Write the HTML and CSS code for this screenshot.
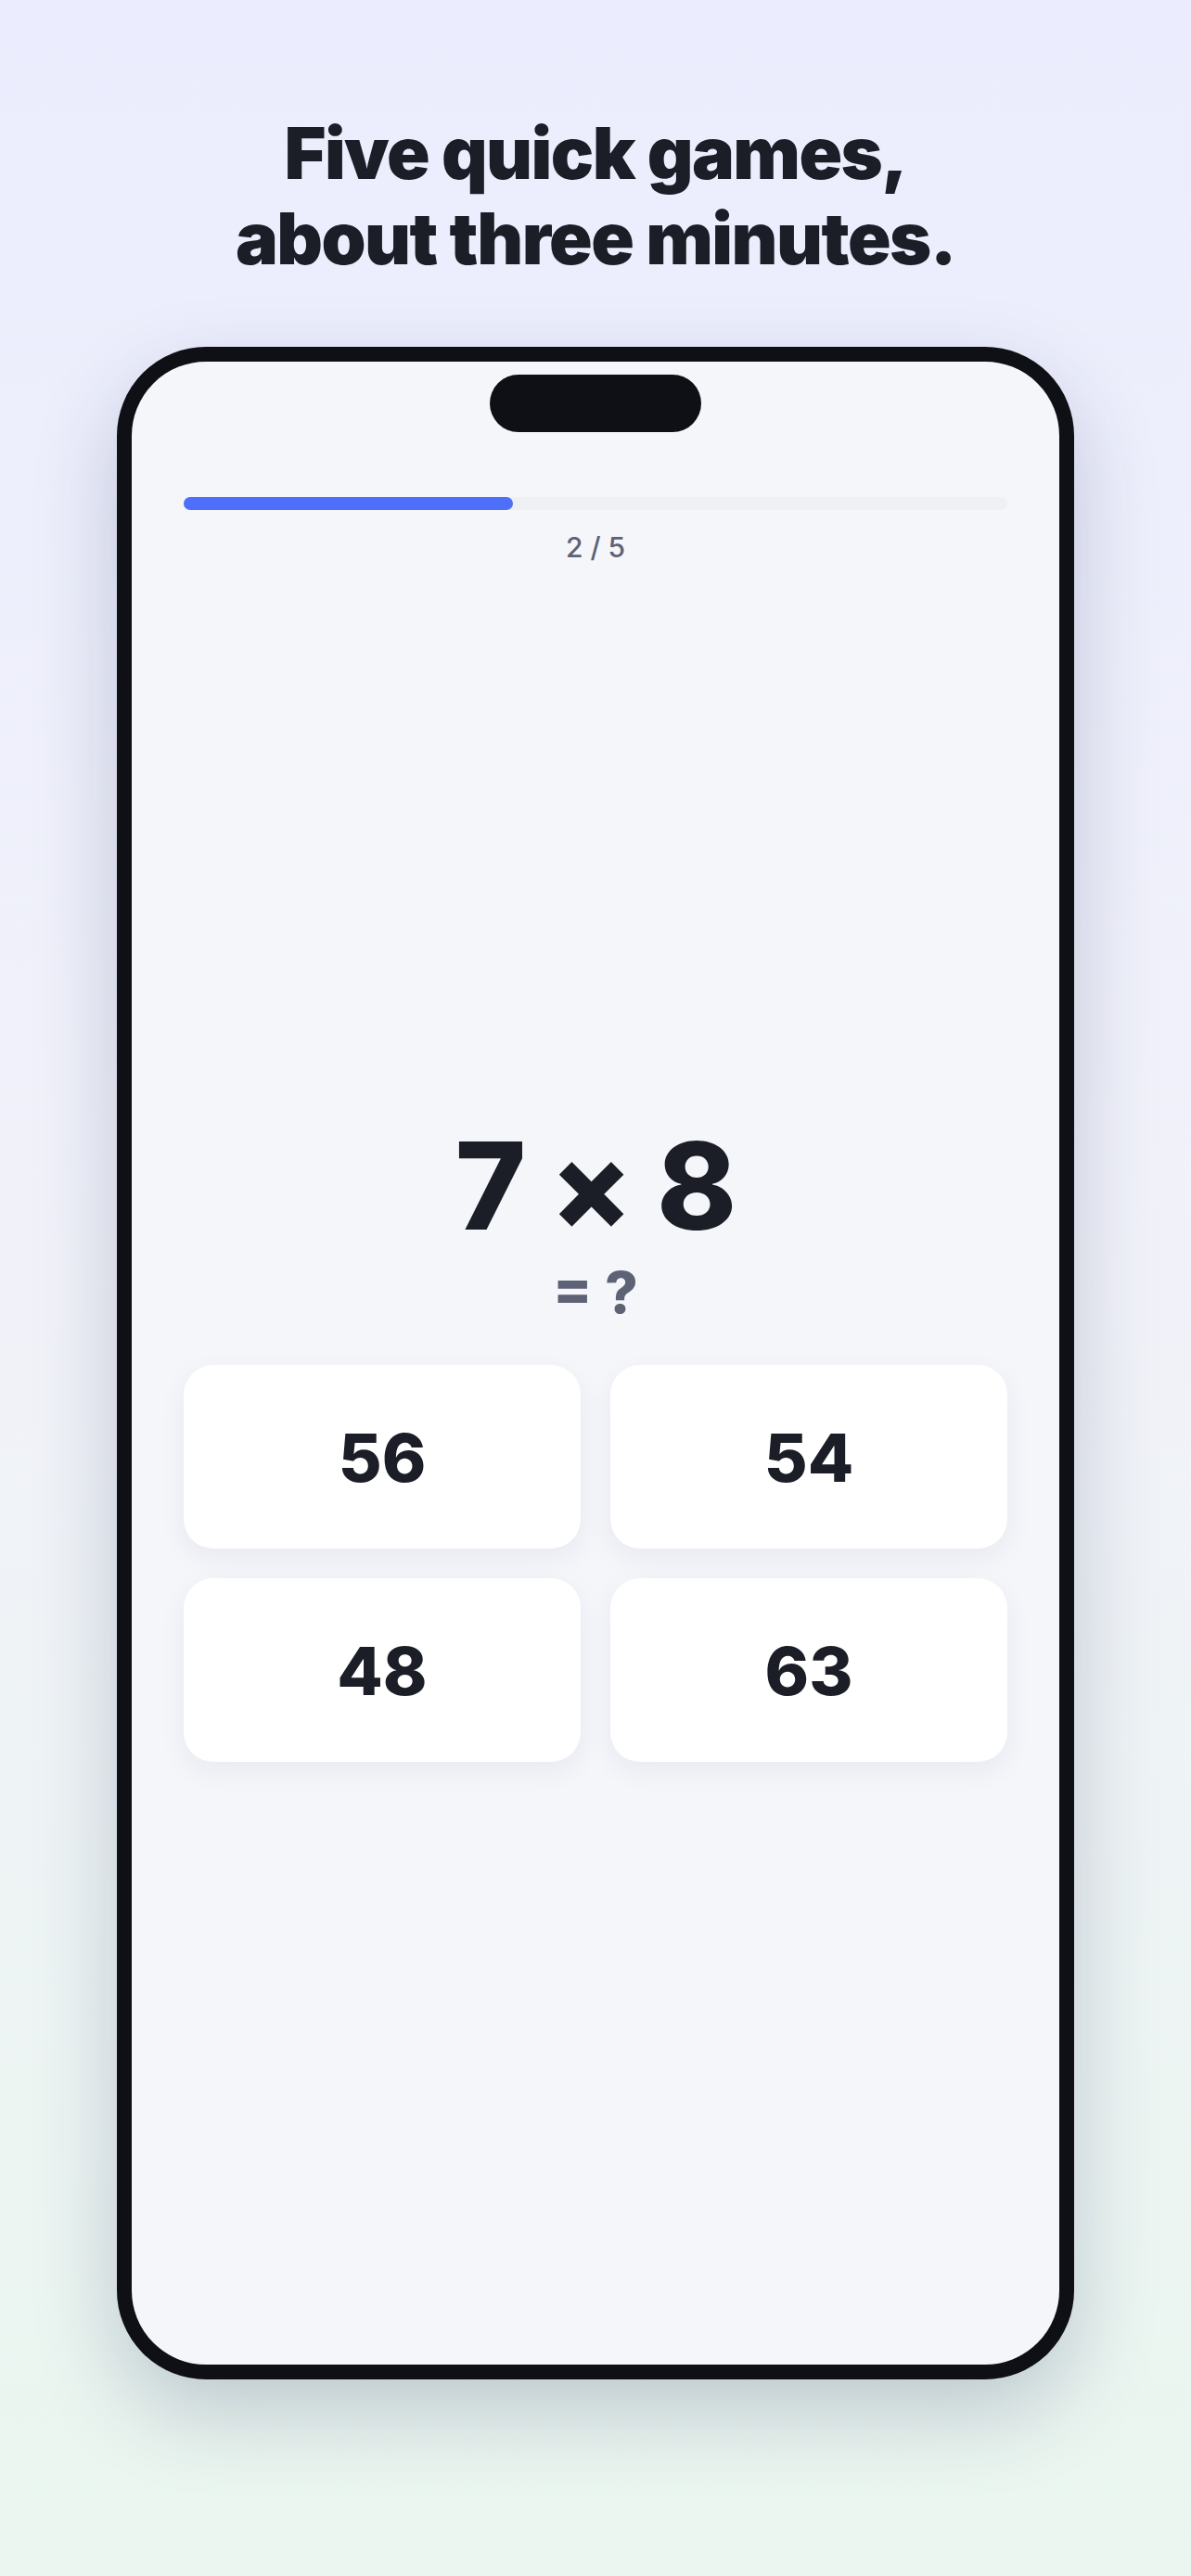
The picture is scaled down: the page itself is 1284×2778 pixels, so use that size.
FILE: index.html
```html
<!DOCTYPE html>
<html lang="en">
  <head>
    <title>Five quick games</title>
    <link rel="stylesheet" href="styles.css">
  </head>
  <body>
    <h1 class="headline">Five quick games,<br />about three minutes.</h1>

    <div class="phone">
      <div class="notch"></div>
      <div class="screen">
        <div class="progress">
          <div class="progress-fill" style="width: 40%"></div>
        </div>
        <p class="count">2 / 5</p>

        <div class="quiz">
          <p class="question">7 × 8</p>
          <p class="equals">= ?</p>
          <div class="answers">
            <button class="answer-btn">56</button>
            <button class="answer-btn">54</button>
            <button class="answer-btn">48</button>
            <button class="answer-btn">63</button>
          </div>
        </div>
      </div>
    </div>
  </body>
</html>
```

FILE: styles.css
```css
body {
  margin: 0;
  height: 2778px;
  padding-top: 119px;
  box-sizing: border-box;
  font-family: Inter, "Noto Sans", sans-serif;
  color: #1b1e27;
  background: linear-gradient(180deg, #ebedfe 0%, #f1f2f9 50%, #eaf6ef 100%);
}

/* headline */
.headline {
  margin: 0;
  text-align: center;
  font-size: 77px;
  line-height: 92px;
  font-weight: 900;
  letter-spacing: -0.02em;
}

/* phone frame */
.phone {
  position: relative;
  width: 1032px;
  height: 2192px;
  margin: 71px auto 0;
  box-sizing: border-box;
  border: 16px solid #0f1015;
  border-radius: 96px;
  background-color: #f5f6fa;
  box-shadow: 0 36px 90px rgba(30, 45, 90, 0.22);
}
.notch {
  position: absolute;
  top: 14px;
  left: 50%;
  width: 228px;
  height: 62px;
  margin-left: -114px;
  border-radius: 31px;
  background-color: #0f1015;
}
.screen {
  height: 100%;
  box-sizing: border-box;
  padding: 146px 56px 0;
  display: flex;
  flex-direction: column;
}

/* progress */
.progress {
  height: 14px;
  border-radius: 7px;
  background-color: #eef0f4;
}
.progress-fill {
  height: 100%;
  border-radius: 7px;
  background-color: #4e6ff9;
}
.count {
  margin: 22px 0 0;
  text-align: center;
  font-size: 30px;
  line-height: 36px;
  font-weight: 500;
  color: #5d6275;
}

/* question + answers */
.quiz {
  flex: 1;
  display: flex;
  flex-direction: column;
  justify-content: center;
  padding-bottom: 44px;
}
.question {
  margin: 0;
  text-align: center;
  font-size: 130px;
  line-height: 130px;
  font-weight: 800;
  letter-spacing: -0.01em;
}
.equals {
  margin: 19px 0 0;
  text-align: center;
  font-size: 62px;
  line-height: 62px;
  font-weight: 800;
  color: #5d6275;
}
.answers {
  margin-top: 47px;
  display: grid;
  grid-template-columns: 1fr 1fr;
  gap: 32px;
}
.answer-btn {
  height: 198px;
  border: none;
  border-radius: 32px;
  background-color: white;
  box-shadow: 0 10px 30px rgba(30, 40, 80, 0.06);
  font-family: Inter, "Noto Sans", sans-serif;
  font-size: 72px;
  font-weight: 800;
  color: #1b1e27;
  cursor: pointer;
}
```
